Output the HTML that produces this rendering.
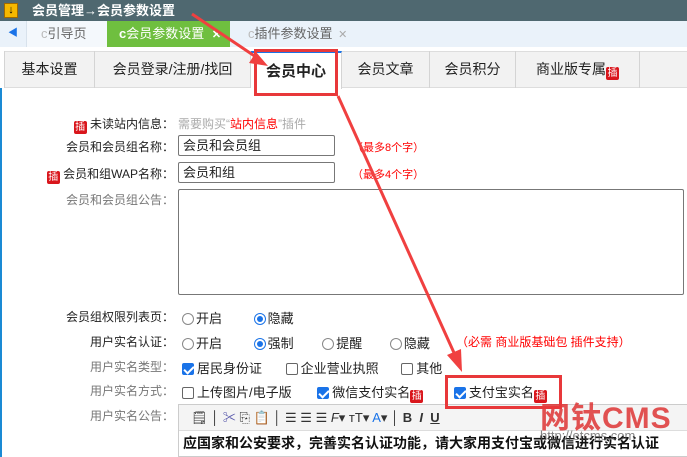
<!DOCTYPE html>
<html><head><meta charset="utf-8">
<style>
*{margin:0;padding:0;box-sizing:border-box}
body{width:687px;height:457px;overflow:hidden;background:#fff;font-family:"Liberation Sans","Noto Sans CJK SC",sans-serif;font-size:12px;color:#222;position:relative}
.a{position:absolute}
.title{left:0;top:0;width:687px;height:21px;background:#4f6870;color:#fff;font-weight:bold;font-size:13px;line-height:21px;padding-left:32px}
.tabbar{left:0;top:21px;width:687px;height:26px;background:#eaf2fa}
.tab{position:absolute;top:0;height:26px;line-height:26px;font-size:13px;color:#666}
.sub{left:4px;top:51px;width:683px;height:37px;background:#f2f2f2;border-top:1px solid #ddd;border-bottom:1px solid #ddd}
.st{position:absolute;top:51px;height:37px;line-height:37px;font-size:14px;text-align:center;border-right:1px solid #d4d4d4;color:#222}
.lbl{position:absolute;right:519px;font-size:12px;color:#222;white-space:nowrap}
.g{color:#777}
.inp{position:absolute;border:1px solid #777;border-radius:2px;background:#fff;font-size:13px;padding-left:4px}
.red{color:#f00}
.cha{display:inline-block;width:13px;height:13px;background:#d9161c;color:#fff;font-size:10px;line-height:13px;text-align:center;border-radius:2px;vertical-align:-2px}
.rad{display:inline-block;width:12px;height:12px;border:1px solid #888;border-radius:50%;vertical-align:-2px;margin-right:2px;position:relative;background:#fff}
.rad.on{border-color:#1a73e8}
.rad.on::after{content:"";position:absolute;left:2px;top:2px;width:6px;height:6px;border-radius:50%;background:#1a73e8}
.cb{display:inline-block;width:12px;height:12px;border:1px solid #666;border-radius:2px;vertical-align:-2px;margin-right:3px;background:#fff;position:relative}
.cb.on{background:#1a73e8;border-color:#1a73e8}
.cb.on::after{content:"";position:absolute;left:3px;top:0px;width:4px;height:8px;border:solid #fff;border-width:0 2px 2px 0;transform:rotate(45deg)}
.row{position:absolute;left:182px;font-size:13px;white-space:nowrap}
</style></head><body>
<div class="a title">会员管理→会员参数设置</div>
<div class="a" style="left:4px;top:3px;width:14px;height:15px;background:#f5b800;border:1px solid #a06a00;color:#000;font-size:11px;line-height:13px;text-align:center;font-weight:bold">↓</div>
<div class="a tabbar">
 <div class="tab" style="left:8px;color:#1a73e8;font-size:10px">◀</div>
 <div class="tab" style="left:26px;width:81px;background:#f4f8fc;border-left:1px solid #d8e2ec;padding-left:14px"><span style="color:#bbb">c</span>引导页</div>
 <div class="tab" style="left:107px;width:123px;background:#6fbf3f;color:#fff;padding-left:12px"><b>c</b>会员参数设置 <b style="font-size:11px;margin-left:4px">✕</b></div>
 <div class="tab" style="left:248px"><span style="color:#bbb">c</span>插件参数设置 <span style="color:#aaa;font-size:11px;margin-left:2px">✕</span></div>
</div>
<div class="a sub"></div>
<div class="st" style="left:4px;width:91px;border-left:1px solid #d4d4d4">基本设置</div>
<div class="st" style="left:95px;width:156px">会员登录/注册/找回</div>
<div class="st" style="left:251px;width:91px;background:#fff;border-top:2px solid #1a73e8;height:38px;font-weight:bold;font-size:15px">会员中心</div>
<div class="st" style="left:342px;width:88px">会员文章</div>
<div class="st" style="left:430px;width:86px">会员积分</div>
<div class="st" style="left:516px;width:124px">商业版专属<span class="cha">插</span></div>
<div class="a" style="left:0;top:88px;width:2px;height:369px;background:#1a8ad4"></div>

<div class="lbl" style="top:115px;right:513px"><span class="cha">插</span> 未读站内信息：</div>
<div class="a" style="left:178px;top:115px;color:#aaa;font-size:12px">需要购买“<span class="red">站内信息</span>”插件</div>
<div class="lbl" style="top:138px;right:513px">会员和会员组名称：</div>
<div class="inp" style="left:178px;top:135px;width:157px;height:21px;line-height:19px">会员和会员组</div>
<div class="a red" style="left:352px;top:139px;font-size:11px">（最多8个字）</div>
<div class="lbl" style="top:165px;right:513px"><span class="cha">插</span> 会员和组WAP名称：</div>
<div class="inp" style="left:178px;top:162px;width:157px;height:21px;line-height:19px">会员和组</div>
<div class="a red" style="left:352px;top:166px;font-size:11px">（最多4个字）</div>
<div class="lbl g" style="top:191px;right:513px">会员和会员组公告：</div>
<div class="inp" style="left:178px;top:189px;width:506px;height:106px"></div>

<div class="lbl" style="top:308px;right:513px">会员组权限列表页：</div>
<div class="row" style="top:308px"><span class="rad"></span>开启 <span style="margin-left:28px"></span><span class="rad on"></span>隐藏</div>
<div class="lbl" style="top:333px;right:513px">用户实名认证：</div>
<div class="row" style="top:333px"><span class="rad"></span>开启 <span style="margin-left:28px"></span><span class="rad on"></span>强制 <span style="margin-left:25px"></span><span class="rad"></span>提醒 <span style="margin-left:24px"></span><span class="rad"></span>隐藏</div>
<div class="a" style="left:456px;top:333px;color:#f00;font-size:12px">（必需 商业版基础包 插件支持）</div>
<div class="lbl g" style="top:358px;right:513px">用户实名类型：</div>
<div class="row" style="top:358px"><span class="cb on"></span>居民身份证 <span style="margin-left:20px"></span><span class="cb"></span>企业营业执照 <span style="margin-left:19px"></span><span class="cb"></span>其他</div>
<div class="lbl g" style="top:382px;right:513px">用户实名方式：</div>
<div class="row" style="top:382px"><span class="cb"></span>上传图片/电子版 <span style="margin-left:22px"></span><span class="cb on"></span>微信支付实名<span class="cha">插</span> <span style="margin-left:27px"></span><span class="cb on"></span>支付宝实名<span class="cha">插</span></div>
<div class="lbl g" style="top:407px;right:513px">用户实名公告：</div>
<div class="a" style="left:178px;top:404px;width:509px;height:53px;border:1px solid #ccc;border-right:none"></div>
<div class="a" style="left:179px;top:405px;width:508px;height:26px;background:#f4f4f4;border-bottom:1px solid #ddd;font-size:13px;line-height:26px;color:#333;white-space:nowrap;padding-left:12px">🗒 │ <span style="color:#55a">✂</span> ⎘ 📋 │ ☰ ☰ ☰ <i>F</i>▾ ᴛT▾ <span style="color:#1a73e8">A</span>▾ │ <b>B</b> &nbsp;<i><b>I</b></i> &nbsp;<u><b>U</b></u></div>
<div class="a" style="left:183px;top:433px;font-size:14px;font-weight:bold;white-space:nowrap;color:#111">应国家和公安要求，完善实名认证功能，请大家用支付宝或微信进行实名认证</div>

<div class="a" style="left:540px;top:393px;font-size:30px;font-weight:bold;color:rgba(220,40,40,.8);letter-spacing:1px;white-space:nowrap">网钛CMS</div>
<div class="a" style="left:540px;top:428px;font-size:13px;color:rgba(80,80,80,.7)">http://etcms.com</div>

<div class="a" style="left:254px;top:49px;width:84px;height:47px;border:3px solid #e8383a"></div>
<div class="a" style="left:445px;top:375px;width:117px;height:34px;border:3px solid #e8383a"></div>
<svg class="a" style="left:0;top:0" width="687" height="457">
 <g stroke="#f04040" stroke-width="3" fill="#f04040">
  <line x1="192" y1="14" x2="256" y2="57"/>
  <polygon points="268,66 249,63 256,52" stroke="none"/>
  <line x1="338" y1="96" x2="455" y2="355"/>
  <polygon points="462,372 447,355 461,349" stroke="none"/>
 </g>
</svg>
</body></html>
